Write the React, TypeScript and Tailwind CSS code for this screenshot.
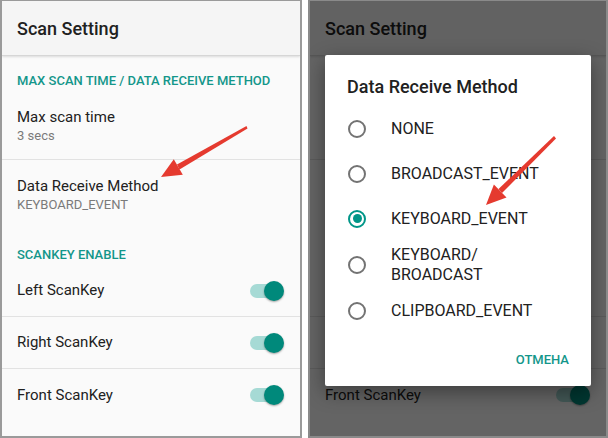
import React from 'react';

const font = { fontFamily: 'Roboto, "Noto Sans", Arial, sans-serif' };

function Toggle() {
  return (
    <div className="relative h-[20px] w-[34px]">
      <div className="absolute left-0 top-[3px] h-[14px] w-[30px] rounded-full bg-[#a6dad5]" />
      <div className="absolute right-0 top-0 h-[20px] w-[20px] rounded-full bg-[#00897b] shadow-[0_1px_2px_rgba(0,0,0,0.35)]" />
    </div>
  );
}

function SectionHeader({ children, className }: { children: React.ReactNode; className: string }) {
  return (
    <div className={`px-[15px] text-[13px] font-medium leading-[18px] text-[#13968a] ${className}`}>
      {children}
    </div>
  );
}

function ScanKeyRow({ label, last }: { label: string; last?: boolean }) {
  return (
    <div
      className={`flex h-[52px] items-center justify-between pl-[15px] pr-[16px] ${
        last ? '' : 'border-b border-[#e2e2e2]'
      }`}
    >
      <span className="text-[15px] text-[#212121]">{label}</span>
      <Toggle />
    </div>
  );
}

function SettingsScreen() {
  return (
    <div className="flex h-full flex-col bg-[#fafafa]">
      <div className="flex h-[55px] shrink-0 items-center border-b border-[#d6d6d6] bg-[#f5f5f5] px-[15px] shadow-[0_1px_2px_rgba(0,0,0,0.12)]">
        <span className="text-[18px] font-medium text-[#212121]">Scan Setting</span>
      </div>
      <SectionHeader className="pt-[16px] pb-[8px]">MAX SCAN TIME / DATA RECEIVE METHOD</SectionHeader>
      <div className="border-b border-[#e2e2e2] px-[15px] pt-[9px] pb-[14px]">
        <div className="text-[15px] leading-[20px] text-[#212121]">Max scan time</div>
        <div className="text-[13px] leading-[18px] text-[#7a7a7a]">3 secs</div>
      </div>
      <div className="px-[15px] pt-[16px] pb-[13px]">
        <div className="text-[15px] leading-[20px] text-[#212121]">Data Receive Method</div>
        <div className="text-[13px] leading-[18px] text-[#7a7a7a]">KEYBOARD_EVENT</div>
      </div>
      <SectionHeader className="pt-[19px] pb-[1px]">SCANKEY ENABLE</SectionHeader>
      <ScanKeyRow label="Left ScanKey" />
      <ScanKeyRow label="Right ScanKey" />
      <ScanKeyRow label="Front ScanKey" last />
    </div>
  );
}

const options = [
  { label: 'NONE' },
  { label: 'BROADCAST_EVENT' },
  { label: 'KEYBOARD_EVENT', checked: true },
  { label: 'KEYBOARD/\nBROADCAST' },
  { label: 'CLIPBOARD_EVENT' },
];

function Radio({ checked }: { checked?: boolean }) {
  return (
    <div
      className={`flex h-[18px] w-[18px] shrink-0 items-center justify-center rounded-full border-2 ${
        checked ? 'border-[#009688]' : 'border-[#737373]'
      }`}
    >
      {checked && <div className="h-[9px] w-[9px] rounded-full bg-[#009688]" />}
    </div>
  );
}

function Dialog() {
  return (
    <div className="absolute left-[15px] top-[54px] flex h-[331px] w-[266px] flex-col rounded-[2px] bg-white shadow-[0_6px_20px_rgba(0,0,0,0.4)]">
      <div className="px-[22px] pt-[20px] text-[18px] font-medium leading-[24px] text-[#212121]">
        Data Receive Method
      </div>
      <div className="mt-[7px]">
        {options.map((o) => {
          const lines = o.label.split('\n');
          return (
            <div
              key={o.label}
              className={`flex items-center pl-[23px] ${lines.length > 1 ? 'h-[47px]' : 'h-[45px]'}`}
            >
              <Radio checked={o.checked} />
              <div className="ml-[25px] text-[16px] leading-[20px] text-[#212121]">
                {lines.map((l) => (
                  <div key={l}>{l}</div>
                ))}
              </div>
            </div>
          );
        })}
      </div>
      <div className="mt-[9px] flex justify-end pr-[14px]">
        <div className="flex h-[36px] items-center px-[8px] text-[13px] font-medium text-[#13968a]">
          ОТМЕНА
        </div>
      </div>
    </div>
  );
}

function Arrows() {
  return (
    <svg className="pointer-events-none absolute left-0 top-0" width="608" height="438">
      <g fill="#e53a2f">
        <polygon points="246.5,126 247.5,128.5 179.5,169.5 177,164.5" />
        <polygon points="161,177 173.8,159.2 182.8,174.8" />
        <polygon points="554,136 556,138.5 502,193 498.5,189" />
        <polygon points="486,205 493.9,184.6 506.5,197.4" />
      </g>
    </svg>
  );
}

export default function App() {
  return (
    <div className="relative flex h-[438px] w-[608px] gap-[6px] bg-white" style={font}>
      <div className="h-[438px] w-[302px] overflow-hidden border-x-2 border-t border-b-2 border-[#9a9a9a]">
        <SettingsScreen />
      </div>
      <div className="relative h-[438px] w-[300px] overflow-hidden border-x-2 border-t border-b-2 border-[#8a8a8a]">
        <SettingsScreen />
        <div className="absolute inset-0 bg-black/60" />
        <Dialog />
      </div>
      <Arrows />
    </div>
  );
}
